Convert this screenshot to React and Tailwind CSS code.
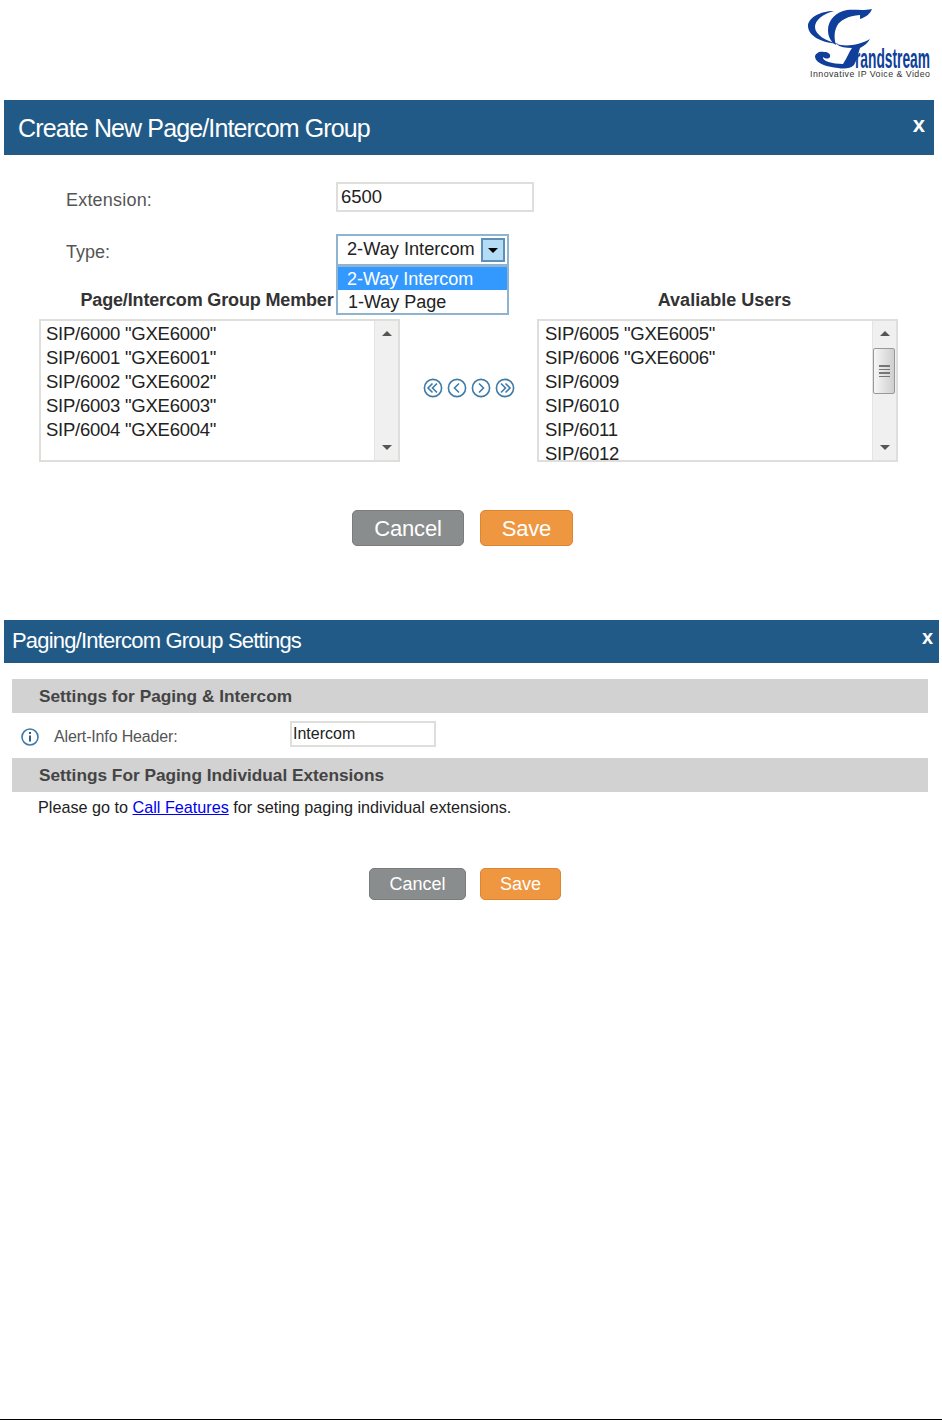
import React from 'react';

const leftUsers = ['SIP/6000 "GXE6000"', 'SIP/6001 "GXE6001"', 'SIP/6002 "GXE6002"', 'SIP/6003 "GXE6003"', 'SIP/6004 "GXE6004"'];
const rightUsers = ['SIP/6005 "GXE6005"', 'SIP/6006 "GXE6006"', 'SIP/6009', 'SIP/6010', 'SIP/6011', 'SIP/6012'];

function Logo() {
  return (
    <svg width="126" height="72" viewBox="0 0 126 72" className="block overflow-visible">
      <g fill="#0f3f9a">
        <path d="M28 3 C14 3 2 10 2 18 C2 28 16 35 33 36 C20 33 9 27 9 19 C9 12 17 6 28 3 Z" />
        <path d="M66 1 C56 3 48 1 41 2 C30 4 22 12 22 22 C22 29 25 34 30 37 C28 30 28 24 31 18 C34 12 42 8 54 7 L54 11 C60 9 64 6 66 1 Z" />
        <path d="M30 36 C40 39 54 37 64 31 C62 35 58 38 54 40 C52 46 51 52 48 57 C44 61 38 61 32 60 C22 59 10 56 9 49 C9 45 14 43 18 44 C22 44 25 46 24 49 C22 52 18 50 17 49 C16 53 26 56 37 56 C41 50 43 44 46 40 C40 40 34 39 30 36 Z" />
      </g>
      <text x="49" y="60" fontFamily="'Liberation Sans', sans-serif" fontSize="27" fontWeight="700" fill="#0f3f9a" textLength="75" lengthAdjust="spacingAndGlyphs">randstream</text>
      <text x="4" y="69" fontFamily="'Liberation Sans', sans-serif" fontSize="8.8" fill="#333" textLength="120" lengthAdjust="spacing">Innovative IP Voice &amp; Video</text>
    </svg>
  );
}

function TitleBar({ title, className, textClass, closeClass }) {
  return (
    <div className={`flex items-center justify-between bg-[#215a87] text-white ${className}`}>
      <span className={textClass}>{title}</span>
      <span className={closeClass}>x</span>
    </div>
  );
}

function ListBox({ items, thumb, pad }) {
  return (
    <div className="flex w-[361px] h-[143px] border-2 border-[#dededa] bg-white overflow-hidden">
      <ul className={`flex-1 pt-[1px] text-[18.5px] leading-[24px] tracking-[-0.25px] text-[#222] overflow-hidden ${pad}`}>
        {items.map((u) => <li key={u} className="whitespace-nowrap">{u}</li>)}
      </ul>
      <div className="relative w-[24px] bg-[#f0f0f0] border-l border-[#e4e4e4]">
        <div className="absolute left-[7px] top-[10px] w-0 h-0 border-x-[5px] border-x-transparent border-b-[5px] border-b-[#555]" />
        {thumb && (
          <div className="absolute left-0 top-[27px] w-[22px] h-[46px] rounded-[2px] border border-[#999] bg-gradient-to-r from-[#f6f6f6] to-[#cfcfcf] flex flex-col items-center justify-center gap-[2px]">
            <i className="block w-[11px] h-[1.5px] bg-[#777]" />
            <i className="block w-[11px] h-[1.5px] bg-[#777]" />
            <i className="block w-[11px] h-[1.5px] bg-[#777]" />
            <i className="block w-[11px] h-[1.5px] bg-[#777]" />
          </div>
        )}
        <div className="absolute left-[7px] bottom-[10px] w-0 h-0 border-x-[5px] border-x-transparent border-t-[5px] border-t-[#555]" />
      </div>
    </div>
  );
}

function ArrowCircle({ flip, double }) {
  return (
    <svg width="20" height="20" viewBox="0 0 20 20" fill="none" stroke="#3f7ba8" strokeWidth="1.6" className={flip ? '-scale-x-100' : ''}>
      <circle cx="10" cy="10" r="8.6" />
      {double ? (
        <>
          <path d="M9.5 5.5 L5 10 L9.5 14.5" />
          <path d="M14 5.5 L9.5 10 L14 14.5" />
        </>
      ) : (
        <path d="M12 5.5 L7.5 10 L12 14.5" />
      )}
    </svg>
  );
}

function Btn({ label, className }) {
  return (
    <button className={`flex items-center justify-center rounded-[5px] text-white ${className}`}>{label}</button>
  );
}

export default function App() {
  return (
    <div className="relative w-[942px] h-[1420px] bg-white overflow-hidden font-[Liberation_Sans,sans-serif]">
      {/* logo */}
      <div className="h-[100px] flex justify-end pt-[8px] pr-[10px]">
        <Logo />
      </div>

      {/* create dialog */}
      <div className="ml-[4px]">
        <TitleBar
          title="Create New Page/Intercom Group"
          className="h-[55px] w-[930px] pl-[14px] pr-[9px]"
          textClass="text-[25px] tracking-[-0.87px] mt-[3px]"
          closeClass="text-[22px] leading-none font-bold mb-[6px]"
        />
      </div>

      <div className="pl-[66px] pt-[27px]">
        <div className="flex items-center h-[30px]">
          <span className="w-[270px] text-[18px] tracking-[0.2px] text-[#555] mt-[6px]">Extension:</span>
          <input readOnly value="6500" className="w-[198px] h-[30px] border-2 border-[#dededa] px-[3px] pb-[1px] text-[18.5px] text-[#222] outline-none" />
        </div>
        <div className="flex items-start h-[32px] mt-[22px]">
          <span className="w-[270px] text-[18px] text-[#555] mt-[5px]">Type:</span>
          <div className="relative">
            <div className="flex items-center justify-between w-[173px] h-[32px] border-2 border-[#8fb4d2] pl-[9px] pr-[2px] text-[18.2px] text-[#222]">
              <span>2-Way Intercom</span>
              <span className="flex items-center justify-center w-[24px] h-[24px] border-2 border-[#5d8fb8] bg-[#b5dcf5]">
                <span className="w-0 h-0 border-x-[5px] border-x-transparent border-t-[5px] border-t-black" />
              </span>
            </div>
            <ul className="absolute z-10 left-0 top-[31px] w-[173px] border-2 border-[#8fb4d2] bg-white text-[18px] leading-[23px]">
              <li className="h-[23px] pt-[1px] pl-[9px] bg-[#3399ff] text-white">2-Way Intercom</li>
              <li className="h-[23px] pt-[1px] pl-[10px] text-[#222]">1-Way Page</li>
            </ul>
          </div>
        </div>
      </div>

      <div className="flex pl-[39px] mt-[23px]">
        <div className="flex flex-col">
          <div className="w-[336px] text-center text-[18px] font-bold leading-[22px] text-[#333] tracking-[-0.15px] whitespace-nowrap">Page/Intercom Group Member</div>
          <div className="mt-[8px]"><ListBox items={leftUsers} pad="pl-[5px]" /></div>
        </div>
        <div className="flex w-[137px] pt-[89px] pl-[23px] gap-[4px]">
          <ArrowCircle double />
          <ArrowCircle />
          <ArrowCircle flip />
          <ArrowCircle flip double />
        </div>
        <div className="flex flex-col">
          <div className="w-[361px] pl-[14px] text-center text-[18px] font-bold leading-[22px] text-[#333]">Avaliable Users</div>
          <div className="mt-[8px]"><ListBox items={rightUsers} thumb pad="pl-[6px]" /></div>
        </div>
      </div>

      <div className="flex gap-[16px] pl-[352px] mt-[48px]">
        <Btn label="Cancel" className="w-[112px] h-[36px] bg-[#8a8d8d] border border-[#7a7d7d] text-[22px] tracking-[-0.2px]" />
        <Btn label="Save" className="w-[93px] h-[36px] bg-[#ee9640] border border-[#dc8630] text-[22px] tracking-[-0.2px]" />
      </div>

      {/* settings dialog */}
      <div className="ml-[4px] mt-[74px]">
        <TitleBar
          title="Paging/Intercom Group Settings"
          className="h-[43px] w-[935px] pl-[8px] pr-[6px]"
          textClass="text-[22px] tracking-[-0.8px] mb-[2px]"
          closeClass="text-[20px] leading-none font-bold mb-[10px]"
        />
      </div>

      <div className="pl-[12px] pr-[14px] pt-[16px]">
        <div className="flex items-center h-[34px] bg-[#d2d2d2] pl-[27px] pt-[2px] text-[17.25px] font-bold text-[#444]">Settings for Paging &amp; Intercom</div>
        <div className="flex items-center h-[45px]">
          <svg width="20" height="20" viewBox="0 0 20 20" fill="none" className="ml-[8px] mt-[3px]">
            <circle cx="10" cy="10" r="8" stroke="#3f7ba8" strokeWidth="1.6" />
            <rect x="9" y="8.5" width="2" height="6" fill="#2c5f8a" />
            <rect x="9" y="5" width="2" height="2" fill="#2c5f8a" />
          </svg>
          <span className="ml-[14px] w-[236px] text-[16px] text-[#555] mt-[3px] tracking-[-0.15px]">Alert-Info Header:</span>
          <input readOnly value="Intercom" className="w-[146px] h-[26px] mb-[3px] border-2 border-[#dededa] px-[1px] pb-[1px] text-[16px] text-[#222] outline-none" />
        </div>
        <div className="flex items-center h-[34px] bg-[#d2d2d2] pl-[27px] pt-[2px] text-[17.25px] font-bold text-[#444]">Settings For Paging Individual Extensions</div>
        <p className="pl-[26px] pt-[4px] text-[16.2px] leading-[22px] text-[#222]">
          Please go to <a href="#" className="text-[#0000ee] underline">Call Features</a> for seting paging individual extensions.
        </p>
      </div>

      <div className="flex gap-[14px] pl-[369px] mt-[50px]">
        <Btn label="Cancel" className="w-[97px] h-[32px] bg-[#8a8d8d] border border-[#7a7d7d] text-[18px]" />
        <Btn label="Save" className="w-[81px] h-[32px] bg-[#ee9640] border border-[#dc8630] text-[18px]" />
      </div>

      <div className="absolute bottom-0 left-0 w-full h-[1px] bg-black" />
    </div>
  );
}
